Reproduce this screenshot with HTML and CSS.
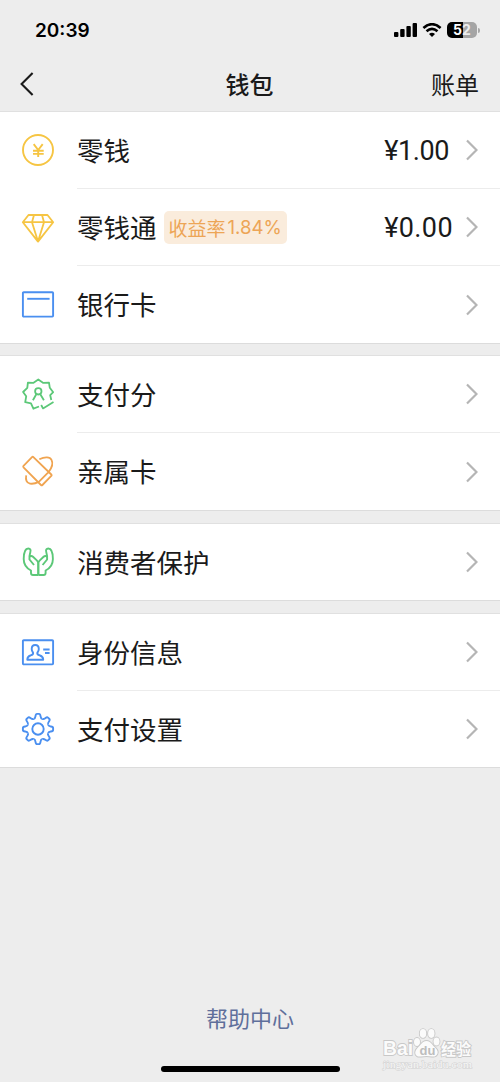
FILE: index.html
```
<!DOCTYPE html>
<html lang="zh-CN">
<head>
	<meta charset="utf-8">
	<meta name="viewport" content="width=device-width, initial-scale=1">
	<title>钱包</title>
	<link rel="stylesheet" href="styles.css">
</head>
<body>
<svg class="svg-defs">
	<symbol id="arrow" viewBox="0 0 12 22"><path d="M1 1.5L10.5 11L1 20.5"/></symbol>
	<path id="tooth" d="M-4.2 -10.2C-3 -10.5 -2.7 -11.3 -2.5 -12.8Q-2.2 -15.1 -1 -15.1H1Q2.2 -15.1 2.5 -12.8C2.7 -11.3 3 -10.5 4.2 -10.2"/>
	<path id="hand" d="M16.3 29H11Q9 29 9 27V24.5C4 22 1.7 18.5 1.7 13C1.7 7 3.3 2.5 6.3 2.5C8.3 2.5 9 4 8.3 6.2C7.3 9.5 7.2 11.5 7.5 13.5L12 19M7.4 12.5C7.2 10 9.3 9.2 11 10.8L14.8 14.4Q16.3 15.8 16.3 17.5V29"/>
</svg>
<div class="page">
	<!-- 状态栏 -->
	<div class="statusbar">
		<span class="time">20:39</span>
		<div class="status-icons">
			<svg class="signal" viewBox="0 0 24 14"><rect x="0" y="9" width="4.4" height="5" rx="1"/><rect x="6.2" y="6" width="4.4" height="8" rx="1"/><rect x="12.4" y="3" width="4.4" height="11" rx="1"/><rect x="18.6" y="0" width="4.4" height="14" rx="1"/></svg>
			<svg class="wifi" viewBox="0 0 20 14"><path d="M1.4 5Q10 -2.6 18.6 5M4.5 8.3Q10 3.6 15.5 8.3"/><path class="dot" d="M7 10.9Q10 8.5 13 10.9L10 14Z"/></svg>
			<div class="battery"><span>5</span><span class="rest">2</span></div>
			<i class="battery-cap"></i>
		</div>
	</div>
	<!-- 导航 -->
	<div class="navbar">
		<svg class="back" viewBox="0 0 14 24"><path d="M12.6 1L1.6 12L12.6 23"/></svg>
		<h1>钱包</h1>
		<a class="bill">账单</a>
	</div>

	<div class="group balance">
		<div class="row">
			<svg class="icon yellow" viewBox="0 0 32 32"><circle cx="16" cy="16" r="15"/><path d="M11.7 10.2L16.2 16V23M20.7 10.2L16.2 16M11 16.8H21.7M11 19.9H21.7"/></svg>
			<div class="cell"><span class="label">零钱</span><span class="money one">¥1.00</span><svg class="arrow"><use href="#arrow"/></svg></div>
		</div>
		<div class="row">
			<svg class="icon yellow thin" viewBox="0 0 32 32"><path d="M6.5 4H25.5L31.2 11.2L16 30.6L.8 11.2ZM.8 11.2H31.2M12 4L10 11.2L16 30.6L22 11.2L20 4"/></svg>
			<div class="cell"><span class="label">零钱通</span><span class="badge">收益率<em>1.84%</em></span><span class="money">¥0.00</span><svg class="arrow"><use href="#arrow"/></svg></div>
		</div>
		<div class="row">
			<svg class="icon blue" viewBox="0 0 32 32"><rect x=".9" y="4.2" width="30.2" height="24.4" rx=".8"/><path d="M5.2 10.8H27.6"/></svg>
			<div class="cell"><span class="label">银行卡</span><svg class="arrow"><use href="#arrow"/></svg></div>
		</div>
	</div>

	<div class="group">
		<div class="row">
			<svg class="icon green thin" viewBox="0 0 32 32"><path d="M29.3 22L28.2 17.2L31.2 14.2L27.8 9.8L27 4.6L21.3 4.9L16.3 1.5L11.2 4.9L5.9 4.6L5.3 9.8L1.1 14L4.2 18.3L3.2 24.2L9 25.3L11.4 30.7L17 28.5M19.2 27L21 30.4L31.5 24.1"/><circle cx="16.3" cy="13.3" r="3.2"/><path d="M14.3 16.3L10.9 22.3M18.3 16.3L21.9 22.3"/></svg>
			<div class="cell"><span class="label">支付分</span><svg class="arrow"><use href="#arrow"/></svg></div>
		</div>
		<div class="row">
			<svg class="icon orange thin" viewBox="0 0 32 32"><path d="M10 2.1Q10.7 1.4 11.4 2.1L29.3 19.5Q30 20.2 29.3 20.9L20.4 30Q19.7 30.7 19 30L1.5 12.3Q.9 11.6 1.5 10.9ZM26.5 17.2L16.8 26.9"/><path d="M17.3 4.2C23 1.5 28 1.8 29.5 4.8C31.4 8.4 29.7 13 26.5 17.2M4.2 20.3C3.4 24.8 4.5 28 8 28.6C11 29.1 14 28.3 16.8 26.9"/></svg>
			<div class="cell"><span class="label">亲属卡</span><svg class="arrow"><use href="#arrow"/></svg></div>
		</div>
	</div>

	<div class="group">
		<div class="row">
			<svg class="icon green" viewBox="0 0 32 32"><use href="#hand"/><use href="#hand" transform="matrix(-1 0 0 1 32.6 0)"/></svg>
			<div class="cell"><span class="label">消费者保护</span><svg class="arrow"><use href="#arrow"/></svg></div>
		</div>
	</div>

	<div class="group setting">
		<div class="row">
			<svg class="icon blue" viewBox="0 0 32 32"><rect x=".9" y="4.2" width="30.2" height="24.2" rx=".8"/><path d="M13.2 9C10.8 9 9.7 10.6 9.7 12.9C9.7 14.7 10.6 15.7 11.1 16.8C11.4 18.6 10.2 18.9 8.4 19.5C6 20.3 5.3 21 5.3 23.7H21.2C21.2 21 20.4 20.3 18 19.5C16.2 18.9 15 18.6 15.3 16.8C15.8 15.7 16.8 14.7 16.8 12.9C16.8 10.6 15.6 9 13.2 9ZM21.2 13.5H27.6M23 17H27.6"/></svg>
			<div class="cell"><span class="label">身份信息</span><svg class="arrow"><use href="#arrow"/></svg></div>
		</div>
		<div class="row">
			<svg class="icon blue" viewBox="0 0 32 32"><g transform="translate(16 16)"><circle r="5.7"/><use href="#tooth"/><use href="#tooth" transform="rotate(45)"/><use href="#tooth" transform="rotate(90)"/><use href="#tooth" transform="rotate(135)"/><use href="#tooth" transform="rotate(180)"/><use href="#tooth" transform="rotate(225)"/><use href="#tooth" transform="rotate(270)"/><use href="#tooth" transform="rotate(315)"/></g></svg>
			<div class="cell"><span class="label">支付设置</span><svg class="arrow"><use href="#arrow"/></svg></div>
		</div>
	</div>

	<div class="footer">
		<a class="help">帮助中心</a>
		<div class="homebar"></div>
	</div>

	<!-- 水印 -->
	<svg class="watermark" viewBox="0 0 100 48">
		<g class="logo">
			<text x="3" y="31" textLength="30" lengthAdjust="spacingAndGlyphs" class="bai">Bai</text>
			<ellipse cx="37" cy="18" rx="3" ry="4"/><ellipse cx="43" cy="9.5" rx="3.2" ry="4.4"/><ellipse cx="51.3" cy="9.5" rx="3.2" ry="4.4"/><ellipse cx="56.5" cy="17.5" rx="3" ry="4"/>
			<path d="M46.5 17C51 17 52 21 55.5 24C60 28 57 33.5 52 32.5C48 31.8 45 31.8 41 32.5C35 33.5 33.5 28 37.5 24C41 21 42 17 46.5 17Z"/>
			<text x="61" y="31" class="jingyan" textLength="30" lengthAdjust="spacingAndGlyphs">经验</text>
		</g>
		<text x="39.5" y="30.5" class="du">du</text>
		<text x="3" y="44" class="url" textLength="89" lengthAdjust="spacingAndGlyphs">jingyan.baidu.com</text>
	</svg>
</div>
</body>
</html>
```
FILE: styles.css
```
*{box-sizing:border-box;}
body{margin:0;background:#ededed;color:#1a1a1a;font-family:"Liberation Sans","Noto Sans CJK SC",sans-serif;}
svg{display:block;fill:none;flex:none;}
.svg-defs{position:absolute;width:0;height:0;}
.page{position:relative;display:flex;flex-direction:column;width:500px;height:1082px;overflow:hidden;}

/* 状态栏 */
.statusbar{display:flex;justify-content:space-between;height:58px;padding:2px 20px 0 35px;align-items:center;color:#000;}
.time{padding-top:1px;font:600 19px/24px Inter,sans-serif;letter-spacing:0;}
.status-icons{display:flex;align-items:center;}
.signal{width:24px;height:14px;fill:#000;}
.wifi{width:20px;height:14px;margin:0 5px 0 4px;stroke:#000;stroke-width:2.6;}
.wifi .dot{fill:#000;stroke:none;}
.battery{display:flex;justify-content:center;width:30px;height:16px;border-radius:5px;background:linear-gradient(90deg,#000 52%,#a5a5a5 52%);font:700 14px/16px Inter,sans-serif;color:#fff;}
.battery .rest{color:#ededed;}
.battery-cap{width:2px;height:5px;margin-left:1px;border-radius:0 2px 2px 0;background:#a8a8a8;}

/* 导航 */
.navbar{display:flex;align-items:center;justify-content:space-between;height:53px;padding:0 21px 1px 20px;}
.back{width:14px;height:24px;margin-right:34px;stroke:#1a1a1a;stroke-width:2.1;}
.navbar h1{margin:0;font:500 24px/36px "Noto Sans CJK SC",sans-serif;}
.bill{font:400 24px/36px "Noto Sans CJK SC",sans-serif;}

/* 列表 */
.group{margin-bottom:12px;background:#fff;border-top:1px solid #e0e0e0;border-bottom:1px solid #dcdcdc;}
.group.balance{margin-bottom:11px;}
.row{display:flex;height:77px;padding-left:22px;}
.row:only-child{height:76px;}
.setting .row:last-child{height:76px;}
.icon{width:32px;height:32px;margin:22px 23px 0 0;stroke-width:1.9;stroke-linejoin:round;overflow:visible;}
.icon.thin{stroke-width:1.8;}
.yellow{stroke:#f6c543;}
.blue{stroke:#4a8ff0;}
.green{stroke:#5cc878;}
.orange{stroke:#f0a450;}
.cell{display:flex;flex:1;align-items:center;padding-right:22px;border-bottom:1px solid #ececec;}
.row:last-child .cell{border-bottom:0;}
.label{padding-bottom:1px;font:400 26.5px/40px "Noto Sans CJK SC",sans-serif;}
.badge{display:flex;align-items:center;height:33px;margin-left:7px;padding:0 5px;border-radius:5px;background:#faecdc;color:#eda556;font:400 19px/33px "Noto Sans CJK SC",sans-serif;}
.badge em{margin-left:2px;font:400 18.6px/33px Inter,sans-serif;}
.money{margin-left:auto;margin-right:13px;padding-top:2px;font:400 27px/36px Roboto,sans-serif;letter-spacing:.4px;}
.money.one{margin-right:17px;letter-spacing:-.4px;}
.arrow{width:12px;height:22px;margin-left:auto;stroke:#b5b5b5;stroke-width:2.2;}
.money + .arrow{margin-left:0;}

/* 底部 */
.footer{display:flex;flex-direction:column;align-items:center;margin-top:auto;padding-bottom:10px;}
.help{color:#5f6f9b;font:400 22px/32px "Noto Sans CJK SC",sans-serif;}
.homebar{width:179px;height:6px;margin-top:33px;border-radius:3px;background:#000;}
.watermark{position:absolute;left:380px;top:1024px;width:100px;height:48px;}
.watermark .logo{fill:#fbfbfb;stroke:#c8c8c8;stroke-width:1.8;paint-order:stroke;}
.bai{font:700 20px "Liberation Sans",sans-serif;}
.jingyan{font:700 16px "Noto Sans CJK SC",sans-serif;}
.watermark .du{fill:#bdbdbd;font:700 13px "Liberation Sans",sans-serif;}
.url{fill:#f7f7f7;stroke:#d2d2d2;stroke-width:1;paint-order:stroke;font:400 11px "Liberation Serif",serif;}
```
